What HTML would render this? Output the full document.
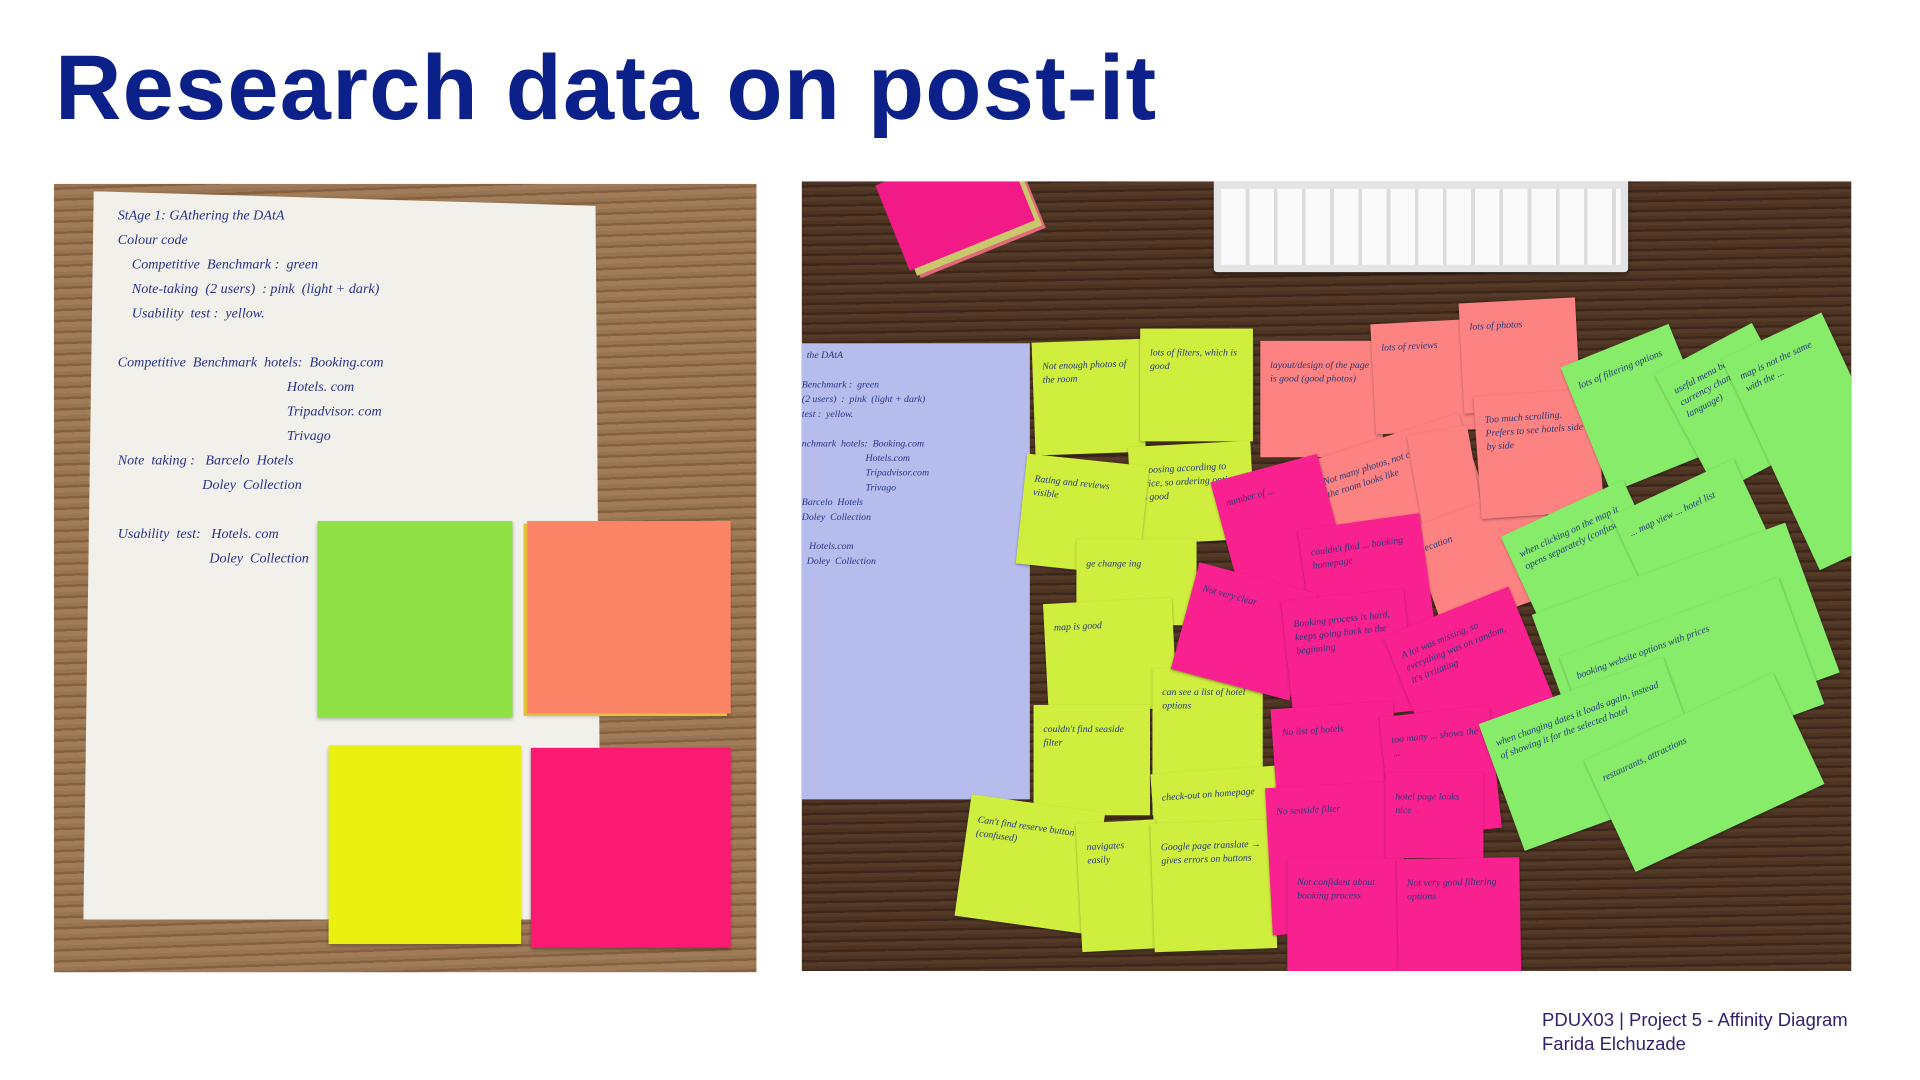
<!DOCTYPE html>
<html><head><meta charset="utf-8">
<style>
html,body{margin:0;padding:0;background:#fff;width:1920px;height:1080px;overflow:hidden;font-family:"Liberation Sans",sans-serif}
.title{position:absolute;left:55px;top:33px;font-size:92px;font-weight:bold;color:#0b2088;letter-spacing:1.2px;line-height:110px;white-space:nowrap}
.foot{position:absolute;left:1542px;top:1008px;font-size:18.5px;line-height:24px;color:#33206f}
.wrap{position:absolute;left:0;top:0;width:1566px;height:881px;transform:scale(1.226);transform-origin:0 0}
.ph{position:absolute;overflow:hidden}
.n{position:absolute;box-shadow:0 1px 2px rgba(0,0,0,.35);font-family:"Liberation Serif",serif;font-style:italic;color:#263a7a;font-size:8px;line-height:11px;padding:14px 8px;box-sizing:border-box}
.y{background:#cfee3e}.s{background:#fd8282}.m{background:#f9208f}.g{background:#86ec6a}
.hw{position:absolute;font-family:"Liberation Serif",serif;font-style:italic;color:#27338a;font-size:11.5px;white-space:pre;line-height:20px}
</style></head><body>
<div class="title">Research data on post-it</div>
<div class="wrap">
 <div class="ph" style="left:44px;top:150px;width:573px;height:643px;background:repeating-linear-gradient(178deg,#987552 0 3px,#86603f 3px 5px,#a07d58 5px 9px)">
  <div style="position:absolute;left:24px;top:6px;width:422px;height:594px;background:#f2f0ea;clip-path:polygon(2% 0,99% 2%,100% 100%,0 100%)"></div>
  <div class="hw" style="left:52px;top:16px">StAge 1: GAthering the DAtA
Colour code
    Competitive  Benchmark :  green
    Note-taking  (2 users)  : pink  (light + dark)
    Usability  test :  yellow.

Competitive  Benchmark  hotels:  Booking.com
                                                Hotels. com
                                                Tripadvisor. com
                                                Trivago
Note  taking :   Barcelo  Hotels
                        Doley  Collection

Usability  test:   Hotels. com
                          Doley  Collection</div>
  <div style="position:absolute;left:215px;top:275px;width:159px;height:160px;background:#8ee044;box-shadow:0 2px 3px rgba(0,0,0,.3)"></div>
  <div style="position:absolute;left:386px;top:275px;width:166px;height:157px;background:#fb8466;box-shadow:-3px 2px 0 #e7c03a,0 2px 3px rgba(0,0,0,.3)"></div>
  <div style="position:absolute;left:224px;top:458px;width:157px;height:162px;background:#eaf00f;box-shadow:0 2px 3px rgba(0,0,0,.3)"></div>
  <div style="position:absolute;left:389px;top:460px;width:163px;height:163px;background:#fb1a72;box-shadow:0 2px 3px rgba(0,0,0,.4)"></div>
 </div>
 <div class="ph" style="left:654px;top:148px;width:856px;height:644px;background:repeating-linear-gradient(179deg,#4d3322 0 3px,#3c271a 3px 5px,#553a28 5px 8px)">
  <div style="position:absolute;left:336px;top:-4px;width:338px;height:78px;background:#e4e4e6;border-radius:3px;box-shadow:0 2px 3px rgba(0,0,0,.4)"></div>
  <div style="position:absolute;left:342px;top:6px;width:326px;height:62px;background:repeating-linear-gradient(90deg,#fafafa 0 20px,#dcdcdf 20px 23px)"></div>
  <div style="position:absolute;left:70px;top:-20px;width:110px;height:75px;background:#f11a86;transform:rotate(-22deg);box-shadow:4px 6px 0 #c9c86a,6px 9px 0 #e06a7a"></div>
  <div style="position:absolute;left:-4px;top:132px;width:190px;height:372px;background:#b6bdec"></div>
  <div class="hw" style="left:0;top:136px;font-size:8px;line-height:12px">  the DAtA

Benchmark :  green
(2 users)  :  pink  (light + dark)
test :  yellow.

nchmark  hotels:  Booking.com
                          Hotels.com
                          Tripadvisor.com
                          Trivago
Barcelo  Hotels
Doley  Collection

   Hotels.com
  Doley  Collection</div>
  <div class="n y" style="left:189px;top:130px;width:90px;height:92px;transform:rotate(-2deg)">Not enough photos of the room</div>
  <div class="n y" style="left:276px;top:120px;width:92px;height:92px">lots of filters, which is good</div>
  <div class="n y" style="left:268px;top:214px;width:100px;height:80px;transform:rotate(-3deg)">choosing according to price, so ordering option is good</div>
  <div class="n y" style="left:179px;top:227px;width:100px;height:90px;transform:rotate(6deg)">Rating and reviews visible</div>
  <div class="n y" style="left:224px;top:292px;width:98px;height:70px"> ge change ing</div>
  <div class="n y" style="left:199px;top:342px;width:105px;height:90px;transform:rotate(-3deg)">map is good</div>
  <div class="n y" style="left:189px;top:427px;width:95px;height:90px">couldn't find seaside filter</div>
  <div class="n y" style="left:286px;top:397px;width:90px;height:120px">can see a list of hotel options</div>
  <div class="n y" style="left:286px;top:480px;width:102px;height:52px;transform:rotate(-4deg)">check-out on homepage</div>
  <div class="n y" style="left:131px;top:507px;width:110px;height:100px;transform:rotate(8deg)">Can't find reserve button (confused)</div>
  <div class="n y" style="left:226px;top:522px;width:65px;height:105px;transform:rotate(-3deg)">navigates easily</div>
  <div class="n y" style="left:286px;top:522px;width:100px;height:105px;transform:rotate(-2deg)">Google page translate → gives errors on buttons</div>
  <div class="n s" style="left:374px;top:130px;width:100px;height:95px">layout/design of the page is good (good photos)</div>
  <div class="n s" style="left:466px;top:114px;width:95px;height:90px;transform:rotate(-3deg)">lots of reviews</div>
  <div class="n s" style="left:538px;top:97px;width:95px;height:90px;transform:rotate(-3deg)">lots of photos</div>
  <div class="n s" style="left:421px;top:207px;width:130px;height:80px;transform:rotate(-18deg)">Not many photos, not clear what the room looks like</div>
  <div class="n s" style="left:506px;top:202px;width:50px;height:150px;transform:rotate(-10deg)"></div>
  <div class="n s" style="left:506px;top:262px;width:110px;height:90px;transform:rotate(-20deg)">ecation</div>
  <div class="n s" style="left:551px;top:172px;width:100px;height:100px;transform:rotate(-4deg)">Too much scrolling. Prefers to see hotels side by side</div>
  <div class="n m" style="left:346px;top:232px;width:90px;height:110px;transform:rotate(-15deg)">number of ...</div>
  <div class="n m" style="left:411px;top:277px;width:100px;height:100px;transform:rotate(-8deg)">couldn't find ... booking homepage</div>
  <div class="n m" style="left:311px;top:322px;width:100px;height:90px;transform:rotate(15deg)">Not very clear</div>
  <div class="n m" style="left:396px;top:337px;width:100px;height:100px;transform:rotate(-6deg)">Booking process is hard, keeps going back to the beginning</div>
  <div class="n m" style="left:491px;top:347px;width:110px;height:110px;transform:rotate(-22deg)">A lot was missing, so everything was on random, it's irritating</div>
  <div class="n m" style="left:386px;top:427px;width:100px;height:110px;transform:rotate(-4deg)">No list of hotels</div>
  <div class="n m" style="left:476px;top:432px;width:90px;height:100px;transform:rotate(-6deg)">too many ... shows the ...</div>
  <div class="n m" style="left:381px;top:492px;width:110px;height:120px;transform:rotate(-3deg)">No seaside filter</div>
  <div class="n m" style="left:476px;top:482px;width:80px;height:70px">hotel page looks nice</div>
  <div class="n m" style="left:396px;top:552px;width:95px;height:94px">Not confident about booking process</div>
  <div class="n m" style="left:486px;top:552px;width:100px;height:94px;transform:rotate(-1deg)">Not very good filtering options</div>
  <div class="n g" style="left:636px;top:130px;width:95px;height:110px;transform:rotate(-22deg)">lots of filtering options</div>
  <div class="n g" style="left:716px;top:130px;width:90px;height:110px;transform:rotate(-28deg)">useful menu bar (easy currency change, language)</div>
  <div class="n g" style="left:786px;top:117px;width:90px;height:190px;transform:rotate(-25deg)">map is not the same with the ...</div>
  <div class="n g" style="left:586px;top:262px;width:110px;height:100px;transform:rotate(-25deg)">when clicking on the map it opens separately (confused)</div>
  <div class="n g" style="left:676px;top:245px;width:110px;height:100px;transform:rotate(-25deg)">... map view ... hotel list</div>
  <div class="n g" style="left:611px;top:312px;width:220px;height:130px;transform:rotate(-20deg)"></div>
  <div class="n g" style="left:631px;top:352px;width:190px;height:110px;transform:rotate(-20deg)">booking website options with prices</div>
  <div class="n g" style="left:566px;top:412px;width:160px;height:110px;transform:rotate(-20deg)">when changing dates it loads again, instead of showing it for the selected hotel</div>
  <div class="n g" style="left:651px;top:432px;width:170px;height:100px;transform:rotate(-25deg)">restaurants, attractions</div>
 </div>
</div>
<div class="foot">PDUX03 | Project 5 - Affinity Diagram<br>Farida Elchuzade</div>
</body></html>
